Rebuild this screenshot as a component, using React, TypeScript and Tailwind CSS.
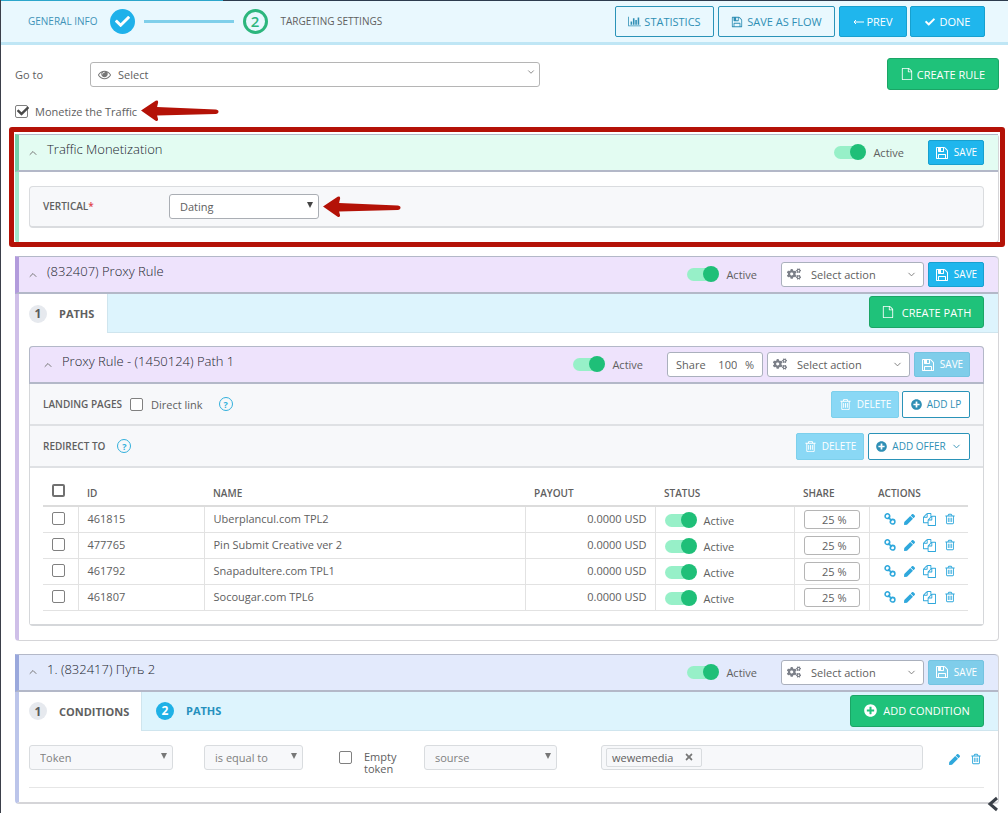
import React from 'react';
import { FaCheck, FaCogs, FaPen, FaPlusCircle, FaTimes } from 'react-icons/fa';
import { ChevronDown, ChevronUp } from 'lucide-react';
import clsx from 'clsx';

const PATHS = {
  file: 'M1596 380q28 28 48 76t20 88v1152q0 40-28 68t-68 28h-1344q-40 0-68-28t-28-68v-1600q0-40 28-68t68-28h896q40 0 88 20t76 48zm-444-244v376h376q-10-29-22-41l-313-313q-12-12-41-22zm384 1528v-1024h-416q-40 0-68-28t-28-68v-416h-768v1536h1280z',
  floppy: 'M512 1536h768v-384h-768v384zm896 0h128v-896q0-14-10-38.5t-20-34.5l-281-281q-10-10-34-20t-39-10v416q0 40-28 68t-68 28h-576q-40 0-68-28t-28-68v-416h-128v1280h128v-416q0-40 28-68t68-28h832q40 0 68 28t28 68v416zm-384-928v-320q0-13-9.5-22.5t-22.5-9.5h-192q-13 0-22.5 9.5t-9.5 22.5v320q0 13 9.5 22.5t22.5 9.5h192q13 0 22.5-9.5t9.5-22.5zm640 32v928q0 40-28 68t-68 28h-1344q-40 0-68-28t-28-68v-1344q0-40 28-68t68-28h928q40 0 88 20t76 48l280 280q28 28 48 76t20 88z',
  trash: 'M704 736v576q0 14-9 23t-23 9h-64q-14 0-23-9t-9-23v-576q0-14 9-23t23-9h64q14 0 23 9t9 23zm256 0v576q0 14-9 23t-23 9h-64q-14 0-23-9t-9-23v-576q0-14 9-23t23-9h64q14 0 23 9t9 23zm256 0v576q0 14-9 23t-23 9h-64q-14 0-23-9t-9-23v-576q0-14 9-23t23-9h64q14 0 23 9t9 23zm128 724v-948h-896v948q0 22 7 40.5t14.5 27 10.5 8.5h832q3 0 10.5-8.5t14.5-27 7-40.5zm-672-1076h448l-48-117q-7-9-17-11h-317q-10 2-17 11zm928 32v64q0 14-9 23t-23 9h-96v948q0 83-47 143.5t-113 60.5h-832q-66 0-113-58.5t-47-141.5v-952h-96q-14 0-23-9t-9-23v-64q0-14 9-23t23-9h309l70-167q15-37 54-63t79-26h320q40 0 79 26t54 63l70 167h309q14 0 23 9t9 23z',
  files: 'M1696 384q40 0 68 28t28 68v1216q0 40-28 68t-68 28h-960q-40 0-68-28t-28-68v-288h-544q-40 0-68-28t-28-68v-672q0-40 20-88t48-76l408-408q28-28 76-48t88-20h416q40 0 68 28t28 68v328q68-40 128-40h416zm-544 213l-299 299h299v-299zm-640-384l-299 299h299v-299zm196 647l316-316v-416h-384v416q0 40-28 68t-68 28h-416v640h512v-256q0-40 20-88t48-76zm956 804v-1152h-384v416q0 40-28 68t-68 28h-416v640h896z',
  eye: 'M1664 960q-152-236-381-353 61 104 61 225 0 185-131.5 316.5t-316.5 131.5-316.5-131.5-131.5-316.5q0-121 61-225-229 117-381 353 133 205 333.5 326.5t434.5 121.5 434.5-121.5 333.5-326.5zm-720-384q0-20-14-34t-34-14q-125 0-214.5 89.5t-89.5 214.5q0 20 14 34t34 14 34-14 14-34q0-86 61-147t147-61q20 0 34-14t14-34zm848 384q0 34-20 69-140 230-376.5 368.5t-499.5 138.5-499.5-139-376.5-368q-20-35-20-69t20-69q140-229 376.5-368t499.5-139 499.5 139 376.5 368q20 35 20 69z',
};

interface IconProps {
  name: keyof typeof PATHS;
  size?: number;
}

const Icon: React.FC<IconProps> = ({ name, size = 12 }) => (
  <svg width={size} height={size} viewBox="0 0 1792 1792" fill="currentColor" className="shrink-0">
    <path d={PATHS[name]} />
  </svg>
);

const ChartIcon = () => (
  <svg width="13" height="11" viewBox="0 0 2048 1792" fill="currentColor" className="shrink-0">
    <path d="M640 896v512h-256v-512h256zm384-512v1024h-256v-1024h256zm1024 1152v128h-2048v-1536h128v1408h1920zm-640-896v768h-256v-768h256zm384-384v1152h-256v-1152h256z" />
  </svg>
);

const ChainIcon = () => (
  <svg width="12" height="12" viewBox="0 0 13 13" fill="none" stroke="currentColor" strokeWidth="1.7">
    <circle cx="3.7" cy="3.4" r="2.500" />
    <circle cx="9.3" cy="9.4" r="2.500" />
    <path d="M4.500 4.500l4 4" />
  </svg>
);

const RedArrow = () => (
  <svg width="78" height="22" viewBox="0 0 80 22" fill="#b41207">
    <path d="M0 10.500L15 0.500q3-1 2.500 2l-1 4.500 60 2.500q3 .3 3 2.300t-3 2.200l-60 1.500 1 4q0 2.500-2.500 1.500z" />
  </svg>
);

const Toggle = () => (
  <label className="flex items-center gap-[7px]">
    <input
      type="checkbox"
      role="switch"
      defaultChecked
      className="relative h-[13px] w-8 appearance-none rounded-full bg-linear-to-r from-[#97f0c8] from-85% to-transparent to-85% before:absolute before:-top-[2px] before:right-0 before:size-4 before:rounded-full before:bg-[#1fbf78]"
    />
    Active
  </label>
);

interface CheckProps {
  label?: string;
  checked?: boolean;
  dark?: boolean;
}

const Check: React.FC<CheckProps> = ({ label, checked, dark }) => (
  <span className="relative flex">
    <input
      type="checkbox"
      aria-label={label}
      defaultChecked={checked}
      className={clsx(
        'size-[13px] appearance-none rounded-[2px] bg-white',
        dark ? 'border-2 border-[#707070]' : 'border border-[#808080]',
      )}
    />
    {checked && <FaCheck size={12} className="pointer-events-none absolute left-[2px] top-0 text-[#4a4a4a]" />}
  </span>
);

interface BoxSelectProps {
  id: string;
  label?: string;
  value: string;
  width: string;
  muted?: boolean;
}

const BoxSelect: React.FC<BoxSelectProps> = ({ id, label, value, width, muted }) => (
  <div className={clsx('relative shrink-0', width)}>
    <select
      id={id}
      aria-label={label}
      className={clsx(
        'h-[25px] w-full appearance-none rounded-[3px] border px-[10px]',
        muted ? 'border-[#d9dcdf] bg-[#f7f8fa] text-[#808080]' : 'border-[#aaaeb4] bg-white',
      )}
    >
      <option>{value}</option>
    </select>
    <svg width="6" height="6" viewBox="0 0 7 7" className="pointer-events-none absolute right-[6px] top-2" fill={muted ? '#777' : '#444'}>
      <path d="M0 0h7L3.500 7z" />
    </svg>
  </div>
);

const ActionSelect = () => (
  <div className="relative w-[143px]">
    <FaCogs size={14} className="pointer-events-none absolute left-[6px] top-[5px] text-[#7b7f88]" />
    <select aria-label="Select action" className="h-[25px] w-full appearance-none rounded-[3px] border border-[#aab0bd] bg-white pl-[29px] pr-5">
      <option>Select action</option>
    </select>
    <ChevronDown size={11} className="pointer-events-none absolute right-[7px] top-[7px] text-[#777]" />
  </div>
);

const SaveButton: React.FC<{ faded?: boolean }> = ({ faded }) => (
  <button
    className={clsx(
      'flex h-[25px] w-14 items-center justify-center gap-[5px] rounded-[2px] border text-[10px] font-medium text-white',
      faded ? 'border-[#74c3e0] bg-[#7fcdea]' : 'border-[#17a0cf] bg-[#1fb6ed]',
    )}
  >
    <Icon name="floppy" size={14} />
    SAVE
  </button>
);

const DeleteButton = () => (
  <button className="flex h-[27px] w-[68px] items-center justify-center gap-[5px] rounded-[2px] border border-[#7dd0ec] bg-[#8ad8f5] text-[10px] font-medium text-white">
    <Icon name="trash" size={13} />
    DELETE
  </button>
);

const GreenButton: React.FC<{ className: string; children: React.ReactNode }> = ({ className, children }) => (
  <button className={clsx('flex h-8 items-center justify-center rounded-[3px] border border-[#1ba566] bg-[#1fc27a] text-[11px] font-medium text-white', className)}>
    {children}
  </button>
);

const Help = () => (
  <button aria-label="Help" className="flex size-[14px] items-center justify-center rounded-full border border-[#32b0dc] text-[9px] font-bold leading-none text-[#32b0dc]">
    ?
  </button>
);

interface BarProps {
  title: string;
  className: string;
  children: React.ReactNode;
}

const PanelBar: React.FC<BarProps> = ({ title, className, children }) => (
  <div className={clsx('flex h-[38px] items-center border-b-2 border-t border-[#b3b8c8]', className)}>
    <button aria-label="Collapse" className="text-[#777]">
      <ChevronUp size={12} />
    </button>
    <h2 className="flex-1 pb-[6px] pl-2 text-[13px] font-light text-[#22252e]">{title}</h2>
    {children}
  </div>
);

const StepBadge: React.FC<{ active?: boolean; children: React.ReactNode }> = ({ active, children }) => (
  <span
    className={clsx(
      'flex size-[18px] items-center justify-center rounded-full text-[12px] font-bold',
      active ? 'bg-[#1fb1e6] text-white' : 'bg-[#e6e9ee] text-[#5c5c5c]',
    )}
  >
    {children}
  </span>
);

const offers = [
  { id: '461815', name: 'Uberplancul.com TPL2' },
  { id: '477765', name: 'Pin Submit Creative ver 2' },
  { id: '461792', name: 'Snapadultere.com TPL1' },
  { id: '461807', name: 'Socougar.com TPL6' },
];

const columns = ['ID', 'NAME', 'PAYOUT', 'STATUS', 'SHARE', 'ACTIONS'];

const OffersTable = () => (
  <table className="w-full table-fixed border-collapse">
    <colgroup>
      <col className="w-[35px]" />
      <col className="w-[126px]" />
      <col />
      <col className="w-[130px]" />
      <col className="w-[139px]" />
      <col className="w-[75px]" />
      <col className="w-[99px]" />
    </colgroup>
    <thead>
      <tr className="h-[30px] border-b-2 border-[#dcdcdc] text-left text-[10px]">
        <th className="pl-[9px]"><Check label="Select all" dark /></th>
        {columns.map((column) => (
          <th key={column} className="pl-[9px] pt-[6px] font-semibold">{column}</th>
        ))}
      </tr>
    </thead>
    <tbody>
      {offers.map((offer) => (
        <tr key={offer.id} className="h-[26px] divide-x divide-[#e2e2e2] border-b border-[#e2e2e2]">
          <td className="pb-[2px] pl-[9px]"><Check label={`Select ${offer.id}`} /></td>
          <td className="pb-[2px] pl-[9px]">{offer.id}</td>
          <td className="pb-[2px] pl-[9px]">{offer.name}</td>
          <td className="pb-[2px] pr-2 text-right">0.0000 USD</td>
          <td className="pl-[9px] pt-[2px]"><Toggle /></td>
          <td className="pl-[9px]">
            <input
              aria-label={`Share of ${offer.id}`}
              defaultValue="25 %"
              className="block h-[19px] w-14 rounded-[3px] border border-[#b5b5b5] pr-3 text-right"
            />
          </td>
          <td className="pl-[14px]">
            <div className="flex items-center gap-2 text-[#2fa8dc]">
              <button aria-label="Link"><ChainIcon /></button>
              <button aria-label="Edit"><FaPen size={11} /></button>
              <button aria-label="Copy"><Icon name="files" size={13} /></button>
              <button aria-label="Remove"><Icon name="trash" /></button>
            </div>
          </td>
        </tr>
      ))}
    </tbody>
  </table>
);

const Header = () => (
  <header className="flex h-[45px] items-center border-b-[3px] border-t border-b-[#bfe6f5] border-t-[#2d3b4e] bg-[#e9f8fe] pl-[27px] pr-[23px]">
    <a href="#general" className="text-[10px] text-[#3f93b8]">GENERAL INFO</a>
    <span className="ml-3 flex size-[25px] items-center justify-center rounded-full bg-[#1fb1ea] text-white">
      <FaCheck size={15} />
    </span>
    <span className="ml-[9px] h-[3px] w-[90px] bg-[#7fcfea]" />
    <span className="ml-[9px] flex size-[25px] items-center justify-center rounded-full border-[3px] border-[#2cb67d] text-[15px] font-semibold text-[#2cb67d]">
      2
    </span>
    <span className="ml-[13px] flex-1 text-[10px]">TARGETING SETTINGS</span>
    <div className="flex gap-[3px] text-[11px]">
      <button className="mr-px flex h-[31px] w-[99px] items-center justify-center gap-[3px] rounded-[2px] border border-[#2a93b8] text-[#2f8fb5]">
        <ChartIcon />
        STATISTICS
      </button>
      <button className="mr-px flex h-[31px] w-[117px] items-center justify-center gap-1 rounded-[2px] border border-[#2a93b8] text-[#2f8fb5]">
        <Icon name="floppy" />
        SAVE AS FLOW
      </button>
      <button className="flex h-[31px] w-[68px] items-center justify-center gap-[2px] rounded-[2px] border border-[#17a0cf] bg-[#1fb6ed] font-medium text-white">
        <svg width="11" height="6" viewBox="0 0 11 6" fill="none" stroke="currentColor"><path d="M11 3H1M3 1L1 3l2 2" /></svg>
        PREV
      </button>
      <button className="flex h-[31px] w-[75px] items-center justify-center gap-[5px] rounded-[2px] border border-[#17a0cf] bg-[#1fb6ed] font-medium text-white">
        <FaCheck size={10} />
        DONE
      </button>
    </div>
  </header>
);

const App: React.FC = () => {
  return (
    <div className="relative min-h-screen border-l border-[#3b3f4a] bg-white font-['Open_Sans',sans-serif] text-[11px] leading-[15px] text-[#606060]">
      <div className="absolute left-0 top-0 h-px w-[22%] bg-[#2ba6cb]" />
      <Header />

      <main className="pl-[14px] pr-[9px] pt-[13px]">
        <div className="flex items-center">
          <label htmlFor="goto" className="w-[75px]">Go to</label>
          <div className="relative w-[450px]">
            <span className="pointer-events-none absolute left-2 top-[6px] text-[#777]"><Icon name="eye" size={13} /></span>
            <select id="goto" className="block h-[25px] w-full appearance-none rounded-[3px] border border-[#b5b5b5] bg-white pl-[27px]">
              <option>Select</option>
            </select>
            <ChevronDown size={10} className="pointer-events-none absolute right-1 top-[5px] text-[#777]" />
          </div>
          <GreenButton className="ml-auto w-28 gap-1">
            <Icon name="file" />
            CREATE RULE
          </GreenButton>
        </div>

        <div className="mt-[10px] flex items-center gap-1">
          <label className="flex items-center gap-[7px]">
            <Check checked />
            Monetize the Traffic
          </label>
          <RedArrow />
        </div>

        <section className="relative mt-3 rounded-[4px] border-b border-l-4 border-r border-[#d5d5d8] border-l-[#a3e8cb]">
          <PanelBar title="Traffic Monetization" className="-ml-1 border-l-4 border-l-[#74cfa9] bg-[#e3fcf2] pl-2 pr-[14px]">
            <Toggle />
            <span className="w-6" />
            <SaveButton />
          </PanelBar>
          <div className="pb-[14px] pl-[10px] pr-[14px] pt-[14px]">
            <div className="flex h-[42px] items-center rounded-[4px] border border-b-2 border-[#dadcdf] bg-[#f7f8fa] pl-[13px]">
              <label htmlFor="vertical" className="w-[126px] text-[10px] font-semibold">VERTICAL<span className="text-[#e0444a]">*</span></label>
              <BoxSelect id="vertical" value="Dating" width="w-[150px]" />
              <span className="ml-1"><RedArrow /></span>
            </div>
          </div>
          <div className="pointer-events-none absolute -bottom-[5px] -left-[10px] -right-[7px] -top-[7px] rounded-[3px] border-[5px] border-[#b41207]" />
        </section>

        <section className="mt-[13px] rounded-[4px] border-b border-l-4 border-r border-[#d5d5d8] border-l-[#cfbfe8]">
          <PanelBar title="(832407) Proxy Rule" className="-ml-1 rounded-tr-[4px] border-l-4 border-l-[#b29bdc] bg-[#eee3fc] pl-2 pr-[14px]">
            <Toggle />
            <span className="w-6" />
            <ActionSelect />
            <span className="w-1" />
            <SaveButton />
          </PanelBar>
          <div className="flex h-[39px] bg-[#ddf4fd]">
            <a href="#paths" className="flex w-[89px] items-center gap-3 border-r border-[#cfe5ee] bg-white pl-[10px] font-bold">
              <StepBadge>1</StepBadge>
              PATHS
            </a>
            <div className="flex flex-1 items-center justify-end border-b border-[#cfe5ee] pb-[2px] pr-[14px]">
              <GreenButton className="w-[115px] gap-2">
                <Icon name="file" />
                CREATE PATH
              </GreenButton>
            </div>
          </div>

          <div className="pb-[14px] pl-[10px] pr-[14px] pt-[13px]">
            <div className="rounded-[4px] border border-b-2 border-t-0 border-[#d5d7da]">
              <PanelBar title="Proxy Rule - (1450124) Path 1" className="-mx-px rounded-t-[4px] border-x bg-[#eee3fc] pl-3 pr-[13px]">
                <Toggle />
                <div className="ml-6 mr-1 flex h-[25px] w-24 items-center justify-between rounded-[3px] border border-[#aab0bd] bg-white px-2">
                  <label htmlFor="share">Share</label>
                  <input id="share" defaultValue="100" className="w-6 text-right" />
                  <span>%</span>
                </div>
                <ActionSelect />
                <span className="w-1" />
                <SaveButton faded />
              </PanelBar>
              <div className="flex h-[42px] items-center border-b-2 border-[#dfe1e4] bg-[#f7f8fa] pl-[13px] pr-[13px]">
                <span className="text-[10px] font-semibold">LANDING PAGES</span>
                <label className="ml-2 mr-4 flex items-center gap-2">
                  <Check />
                  Direct link
                </label>
                <Help />
                <div className="ml-auto flex gap-[3px]">
                  <DeleteButton />
                  <button className="flex h-[27px] w-[68px] items-center justify-center gap-[5px] rounded-[2px] border border-[#2a93b8] bg-white text-[10px] text-[#2f8fb5]">
                    <FaPlusCircle size={11} />
                    ADD LP
                  </button>
                </div>
              </div>
              <div className="flex h-[42px] items-center gap-3 border-b-2 border-[#dfe1e4] bg-[#f7f8fa] pl-[13px] pr-[13px]">
                <span className="text-[10px] font-semibold">REDIRECT TO</span>
                <Help />
                <div className="ml-auto flex gap-1">
                  <DeleteButton />
                  <button className="flex h-[27px] w-[102px] items-center justify-center gap-[5px] rounded-[2px] border border-[#2a93b8] bg-white text-[10px] text-[#2f8fb5]">
                    <FaPlusCircle size={11} />
                    ADD OFFER
                    <ChevronDown size={11} />
                  </button>
                </div>
              </div>
              <div className="bg-white pb-[13px] pl-[13px] pr-[15px] pt-2">
                <OffersTable />
              </div>
            </div>
          </div>
        </section>

        <section className="mt-[13px] rounded-[4px] border-b-2 border-l-4 border-r border-[#d5d5d8] border-l-[#bcc5ea]">
          <PanelBar title="1. (832417) Путь 2" className="-ml-1 rounded-tr-[4px] border-l-4 border-l-[#9aa8dc] bg-[#e3eafc] pl-2 pr-[14px]">
            <Toggle />
            <span className="w-6" />
            <ActionSelect />
            <span className="w-1" />
            <SaveButton faded />
          </PanelBar>
          <div className="flex h-[39px] bg-[#ddf4fd]">
            <a href="#conditions" className="flex w-[123px] items-center gap-3 border-r border-[#cfe5ee] bg-white pl-[10px] font-bold">
              <StepBadge>1</StepBadge>
              CONDITIONS
            </a>
            <div className="flex flex-1 items-center border-b border-[#cfe5ee] pl-[14px] pr-[14px]">
              <a href="#paths-2" className="flex items-center gap-3 font-bold text-[#2590bd]">
                <StepBadge active>2</StepBadge>
                PATHS
              </a>
              <GreenButton className="ml-auto w-[134px] gap-[6px]">
                <FaPlusCircle size={13} />
                ADD CONDITION
              </GreenButton>
            </div>
          </div>
          <div className="pb-[14px] pl-[10px] pr-[14px] pt-[14px]">
            <div className="flex h-[43px] items-start border-b border-[#e6e6e6]">
              <BoxSelect id="parameter" label="Parameter" value="Token" width="w-36" muted />
              <span className="w-[31px]" />
              <BoxSelect id="operator" label="Operator" value="is equal to" width="w-[99px]" muted />
              <label className="ml-9 flex w-[85px] gap-3 pt-[6px] leading-3">
                <Check />
                Empty token
              </label>
              <BoxSelect id="source" label="Source" value="sourse" width="w-[133px]" muted />
              <div className="ml-11 flex h-[25px] flex-1 items-center rounded-[3px] border border-[#d9dcdf] bg-[#f7f8fa] pl-1">
                <span className="flex h-[19px] items-center gap-[11px] rounded-[2px] border border-[#d9dcdf] pl-[5px] pr-[7px]">
                  wewemedia
                  <button aria-label="Remove wewemedia"><FaTimes size={10} className="text-[#777]" /></button>
                </span>
              </div>
              <div className="ml-[26px] flex h-[29px] items-center gap-[10px] pr-[2px] text-[#2fa8dc]">
                <button aria-label="Edit condition"><FaPen size={11} /></button>
                <button aria-label="Remove condition"><Icon name="trash" /></button>
              </div>
            </div>
          </div>
        </section>
      </main>

      <button aria-label="Open sidebar" className="fixed bottom-0 right-[9px] text-[#3a4048]">
        <svg width="12" height="18" viewBox="0 0 12 18" fill="none" stroke="currentColor" strokeWidth="3"><path d="M10 3L3 9l7 6" /></svg>
      </button>
    </div>
  );
};

export default App;
